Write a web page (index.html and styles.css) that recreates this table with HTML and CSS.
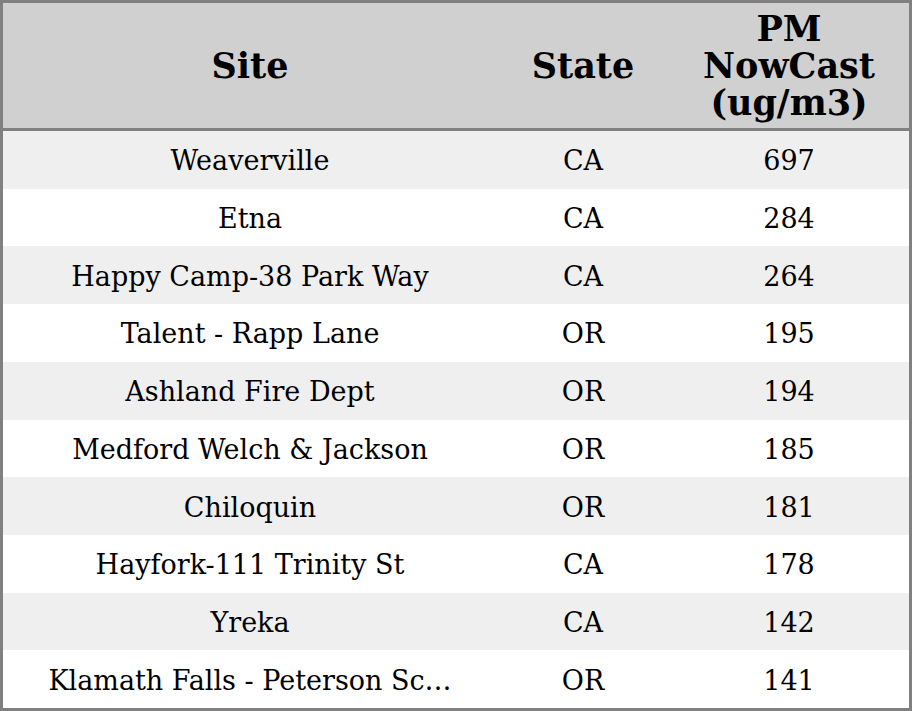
FILE: index.html
```html
<!DOCTYPE html>
<html>
<head>
<meta charset="utf-8">
<link rel="stylesheet" href="styles.css">
</head>
<body>
<div class="table">
  <div class="row head">
    <div class="cell">Site</div>
    <div class="cell">State</div>
    <div class="cell">PM<br>NowCast<br>(ug/m3)</div>
  </div>
  <div class="body">
    <div class="row odd"><div class="cell">Weaverville</div><div class="cell">CA</div><div class="cell">697</div></div>
    <div class="row"><div class="cell">Etna</div><div class="cell">CA</div><div class="cell">284</div></div>
    <div class="row odd"><div class="cell">Happy Camp-38 Park Way</div><div class="cell">CA</div><div class="cell">264</div></div>
    <div class="row"><div class="cell">Talent - Rapp Lane</div><div class="cell">OR</div><div class="cell">195</div></div>
    <div class="row odd"><div class="cell">Ashland Fire Dept</div><div class="cell">OR</div><div class="cell">194</div></div>
    <div class="row"><div class="cell">Medford Welch &amp; Jackson</div><div class="cell">OR</div><div class="cell">185</div></div>
    <div class="row odd"><div class="cell">Chiloquin</div><div class="cell">OR</div><div class="cell">181</div></div>
    <div class="row"><div class="cell">Hayfork-111 Trinity St</div><div class="cell">CA</div><div class="cell">178</div></div>
    <div class="row odd"><div class="cell">Yreka</div><div class="cell">CA</div><div class="cell">142</div></div>
    <div class="row"><div class="cell">Klamath Falls - Peterson Sc…</div><div class="cell">OR</div><div class="cell">141</div></div>
  </div>
</div>
</body>
</html>
```
FILE: styles.css
```css
html, body {
  margin: 0;
  padding: 0;
  background: #ffffff;
}
.table {
  box-sizing: border-box;
  width: 912px;
  height: 711px;
  border: 3px solid #808080;
  display: flex;
  flex-direction: column;
  font-family: "DejaVu Serif", serif;
  color: #000;
}
.row {
  display: grid;
  grid-template-columns: 494px 172px 240px;
}
.head {
  box-sizing: border-box;
  height: 128px;
  background: #d0d0d0;
  border-bottom: 3px solid #808080;
  font-weight: bold;
  font-size: 35px;
  line-height: 37px;
}
.body {
  flex: 1;
  display: grid;
  grid-template-rows: repeat(10, 1fr);
  font-size: 27px;
}
.body .cell {
  padding-top: 2px;
}
.odd {
  background: #efefef;
}
.cell {
  display: flex;
  align-items: center;
  justify-content: center;
  text-align: center;
  white-space: nowrap;
}
.head .cell {
  white-space: normal;
}
```
